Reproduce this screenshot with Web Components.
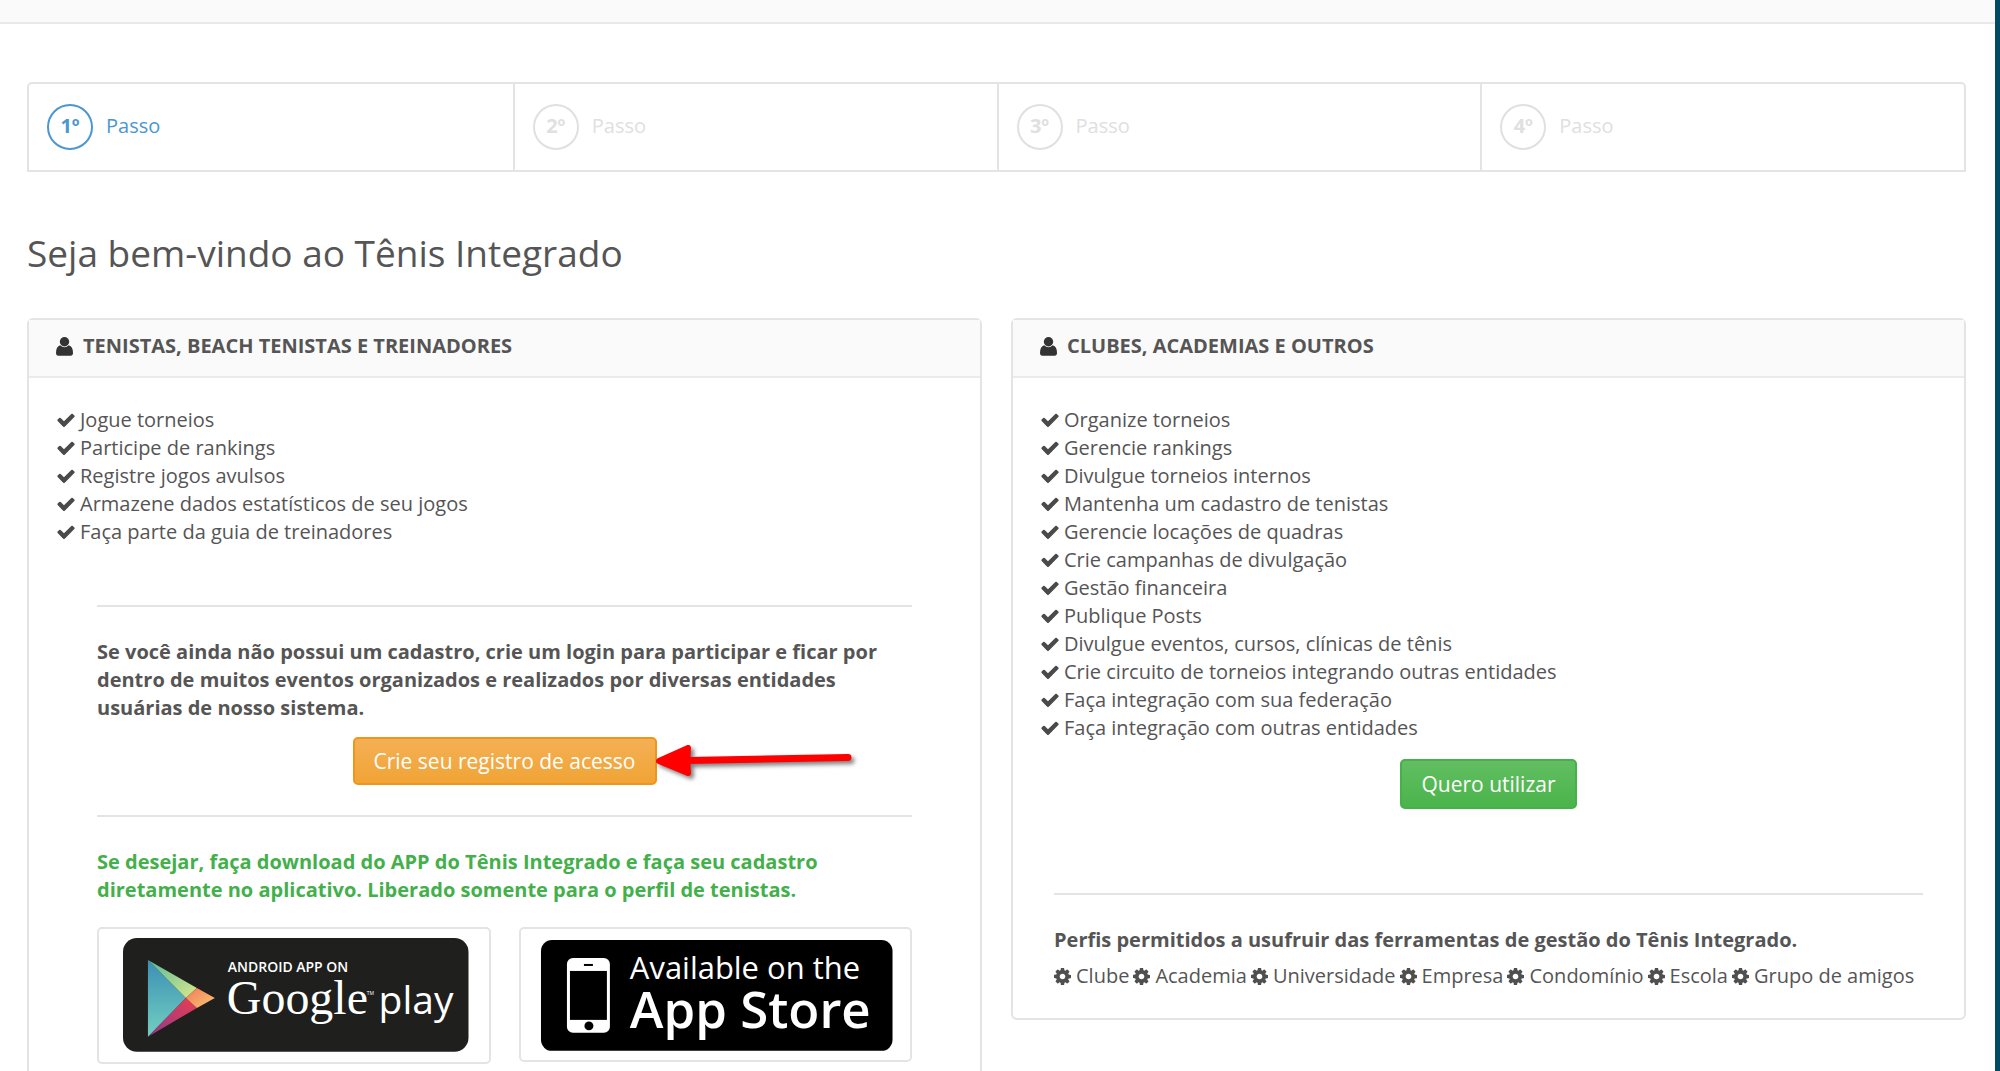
<!DOCTYPE html>
<html lang="pt-BR">
<head>
<meta charset="utf-8">
<title>Tênis Integrado</title>
<style>
    body{
        margin: 0;
        background: #fff;
        color: #555;
        font: 20px/28px "Open Sans", sans-serif;
    }
</style>
</head>
<body>
<cadastro-page>
    <step-list>
        <step-item number="1º" active>Passo</step-item>
        <step-item number="2º">Passo</step-item>
        <step-item number="3º">Passo</step-item>
        <step-item number="4º">Passo</step-item>
    </step-list>

    <page-title>Seja bem-vindo ao Tênis Integrado</page-title>

    <panel-row>
        <info-panel heading="TENISTAS, BEACH TENISTAS E TREINADORES">
            <check-list>
                <check-item>Jogue torneios</check-item>
                <check-item>Participe de rankings</check-item>
                <check-item>Registre jogos avulsos</check-item>
                <check-item>Armazene dados estatísticos de seu jogos</check-item>
                <check-item>Faça parte da guia de treinadores</check-item>
            </check-list>
            <panel-section style="--top: 57px; --inset: 41px">
                <bold-text>Se você ainda não possui um cadastro, crie um login para participar e ficar por dentro de muitos eventos organizados e realizados por diversas entidades usuárias de nosso sistema.</bold-text>
                <action-button kind="warning">Crie seu registro de acesso<red-arrow slot="mark"></red-arrow></action-button>
            </panel-section>
            <panel-section style="--top: 30px; --inset: 41px">
                <bold-text kind="success">Se desejar, faça download do APP do Tênis Integrado e faça seu cadastro diretamente no aplicativo. Liberado somente para o perfil de tenistas.</bold-text>
                <store-badges></store-badges>
            </panel-section>
        </info-panel>

        <info-panel heading="CLUBES, ACADEMIAS E OUTROS">
            <check-list>
                <check-item>Organize torneios</check-item>
                <check-item>Gerencie rankings</check-item>
                <check-item>Divulgue torneios internos</check-item>
                <check-item>Mantenha um cadastro de tenistas</check-item>
                <check-item>Gerencie locações de quadras</check-item>
                <check-item>Crie campanhas de divulgação</check-item>
                <check-item>Gestão financeira</check-item>
                <check-item>Publique Posts</check-item>
                <check-item>Divulgue eventos, cursos, clínicas de tênis</check-item>
                <check-item>Crie circuito de torneios integrando outras entidades</check-item>
                <check-item>Faça integração com sua federação</check-item>
                <check-item>Faça integração com outras entidades</check-item>
            </check-list>
            <action-button kind="success">Quero utilizar</action-button>
            <panel-section style="--top: 84px; --inset: 14px">
                <bold-text>Perfis permitidos a usufruir das ferramentas de gestão do Tênis Integrado.</bold-text>
                <profile-list items="Clube,Academia,Universidade,Empresa,Condomínio,Escola,Grupo de amigos"></profile-list>
            </panel-section>
        </info-panel>
    </panel-row>
</cadastro-page>

<script>
const LINE = '#e4e4e4'

// registers an element whose shadow root is cloned from the given markup
const define = (name, html, setup) => {
    const template = document.createElement('template')
    template.innerHTML = html

    window.customElements.define(name, class extends HTMLElement{
        constructor(){
            super()
            this.attachShadow({mode:"open"})
        }

        connectedCallback(){
            if(this.shadowRoot.childNodes.length) return
            const templateCopy = template.content.cloneNode(true)
            if(setup) setup(this, templateCopy)
            this.shadowRoot.appendChild(templateCopy)
        }
    })
}

define('cadastro-page', `
<style>
    :host{
        display: block;
        box-sizing: border-box;
        min-height: 100vh;
        border-right: 5px solid #004b63;
    }
    header{
        height: 22px;
        background: #fafafa;
        border-bottom: 2px solid #e9e9e9;
    }
    main{
        padding: 58px 29px 40px 27px;
    }
</style>
<header></header>
<main><slot></slot></main>
`)

define('step-list', `
<style>
    :host{
        display: grid;
        grid-template-columns: repeat(4, 1fr);
        border: 2px solid ${LINE};
        border-radius: 5px 5px 0 0;
    }
</style>
<slot></slot>
`)

define('step-item', `
<style>
    :host{
        display: flex;
        align-items: center;
        gap: 13px;
        padding: 20px 18px;
        color: #e0e0e0;
    }
    :host(:not(:first-child)){
        border-left: 2px solid ${LINE};
    }
    :host([active]){
        color: #4b97d2;
    }
    b{
        box-sizing: border-box;
        width: 46px;
        height: 46px;
        border: 2px solid;
        border-radius: 50%;
        line-height: 40px;
        text-align: center;
    }
    span{
        padding-bottom: 2px;
    }
</style>
<b></b>
<span><slot></slot></span>
`, (host, root) => {
    root.querySelector('b').textContent = host.getAttribute('number')
})

define('page-title', `
<style>
    :host{
        display: block;
        padding: 55px 0 39px;
    }
    h1{
        margin: 0;
        font-size: 37px;
        font-weight: 400;
        line-height: 52px;
    }
</style>
<h1><slot></slot></h1>
`)

define('panel-row', `
<style>
    :host{
        display: grid;
        grid-template-columns: 1fr 1fr;
        align-items: start;
        gap: 29px;
    }
</style>
<slot></slot>
`)

define('info-panel', `
<style>
    :host{
        display: block;
        border: 2px solid ${LINE};
        border-radius: 6px;
    }
    header{
        display: flex;
        align-items: center;
        gap: 10px;
        padding: 12px 27px 16px;
        background: #fafafa;
        border-bottom: 2px solid #ebebeb;
    }
    h2{
        margin: 0;
        font-size: 20px;
        line-height: 28px;
    }
    .body{
        padding: 28px 27px;
    }
</style>
<header>
    <svg width="17" height="19" viewBox="0 0 17 19" fill="#333" aria-hidden="true">
        <circle cx="8.5" cy="4.8" r="4.7"/>
        <path d="M4.2 8.2Q8.5 12.2 12.8 8.2Q17 9.6 17 15.8Q17 18.8 14.6 18.8H2.4Q0 18.8 0 15.8Q0 9.6 4.2 8.2Z"/>
    </svg>
    <h2></h2>
</header>
<div class="body"><slot></slot></div>
`, (host, root) => {
    root.querySelector('h2').textContent = host.getAttribute('heading')
})

define('check-list', `
<style>
    :host{
        display: block;
        padding-bottom: 2px;
    }
</style>
<div role="list"><slot></slot></div>
`)

define('check-item', `
<style>
    :host{
        display: flex;
        align-items: center;
        gap: 4px;
    }
</style>
<svg width="20" height="20" viewBox="0 0 1792 1792" fill="#4a4a4a" aria-hidden="true">
    <path d="M1671 566q0 40-28 68l-724 724-136 136q-28 28-68 28t-68-28l-136-136-362-362q-28-28-28-68t28-68l136-136q28-28 68-28t68 28l294 295 656-657q28-28 68-28t68 28l136 136q28 28 28 68z"/>
</svg>
<span><slot></slot></span>
`, host => host.setAttribute('role', 'listitem'))

define('panel-section', `
<style>
    :host{
        display: block;
        margin: var(--top) var(--inset) 0;
    }
    hr{
        margin: 0 0 31px;
        border: 0;
        border-top: 2px solid ${LINE};
    }
</style>
<hr>
<slot></slot>
`)

define('bold-text', `
<style>
    :host{
        display: block;
    }
    :host([kind=success]){
        color: #43b04b;
    }
    p{
        margin: 0;
        font-weight: 700;
    }
</style>
<p><slot></slot></p>
`)

define('action-button', `
<style>
    :host{
        display: flex;
        justify-content: center;
        margin-top: 15px;
    }
    div{
        position: relative;
    }
    button{
        display: block;
        padding: 8px 19px;
        border: 2px solid #ee961c;
        border-radius: 5px;
        background: linear-gradient(#f4b056, #f1a435);
        color: #fff;
        font: inherit;
        font-size: 21px;
        line-height: 28px;
    }
    :host([kind=success]) button{
        border-color: #46b04a;
        background: linear-gradient(#61be61, #4bb44b);
        padding: 9px 19px;
    }
</style>
<div>
    <button type="button"><slot></slot></button>
    <slot name="mark"></slot>
</div>
`)

// hand-drawn pointer laid over the page beside the button
define('red-arrow', `
<style>
    :host{
        position: absolute;
        left: 100%;
        top: 0;
        margin-left: -3px;
    }
    svg{
        display: block;
        filter: drop-shadow(3px 3px 2px rgba(0, 0, 0, .5));
    }
</style>
<svg width="206" height="48" viewBox="0 0 206 48" aria-hidden="true">
    <path d="M5 24L34 11Q33 24 34 36Z" fill="red" stroke="red" stroke-width="6" stroke-linejoin="round"/>
    <path d="M34 23.5L194 20.5" stroke="red" stroke-width="7" stroke-linecap="round"/>
</svg>
`)

define('store-badges', `
<style>
    :host{
        display: grid;
        grid-template-columns: 1fr 1fr;
        align-items: start;
        gap: 28px;
        margin-top: 23px;
    }
    a{
        display: block;
        padding: 7px;
        border: 2px solid ${LINE};
        border-radius: 5px;
    }
    svg{
        display: block;
        width: 100%;
    }
    text{
        fill: #fff;
        font-family: "Open Sans", sans-serif;
    }
</style>
<a href="#google-play">
    <svg viewBox="0 0 376 119">
        <defs>
            <linearGradient id="blue" x1="0" y1="0" x2="0" y2="1">
                <stop offset="0" stop-color="#3b8fb5"/>
                <stop offset="1" stop-color="#72d0c0"/>
            </linearGradient>
            <linearGradient id="green" x1="0" y1="0" x2="1" y2="1">
                <stop offset="0" stop-color="#58b99b"/>
                <stop offset="1" stop-color="#d9e98a"/>
            </linearGradient>
            <linearGradient id="red" x1="1" y1="0" x2="0" y2="1">
                <stop offset="0" stop-color="#ea3d50"/>
                <stop offset="1" stop-color="#8e3a8c"/>
            </linearGradient>
            <linearGradient id="orange" x1="0" y1="0" x2="1" y2="1">
                <stop offset="0" stop-color="#f4785a"/>
                <stop offset="1" stop-color="#f6c873"/>
            </linearGradient>
        </defs>
        <rect x="17" y="2" width="346" height="114" rx="14" fill="#1f1f1d"/>
        <path d="M42 24L80 62L42 101Z" fill="url(#blue)"/>
        <path d="M42 24L91 52L80 62Z" fill="url(#green)"/>
        <path d="M42 101L80 62L91 72Z" fill="url(#red)"/>
        <path d="M80 62L91 52L109 62L91 72Z" fill="url(#orange)"/>
        <text x="122" y="36" font-size="14" font-weight="600">ANDROID APP ON</text>
        <text x="121" y="78" style="font-family: 'Liberation Serif', serif" font-size="48">Google</text>
        <text x="261" y="59" font-size="5">TM</text>
        <text x="273" y="78" font-size="39">play</text>
    </svg>
</a>
<a href="#app-store">
    <svg viewBox="0 0 376 117">
        <rect x="13" y="4" width="352" height="111" rx="11"/>
        <rect x="39" y="22" width="43" height="75" rx="6" fill="#fff"/>
        <rect x="42" y="35" width="37" height="49"/>
        <path d="M56 29H65" stroke="#000" stroke-width="2"/>
        <circle cx="61" cy="90" r="4.5"/>
        <text x="102" y="43" font-size="31">Available on the</text>
        <text x="102" y="92" font-size="51" font-weight="600">App Store</text>
    </svg>
</a>
`)

define('profile-list', `
<style>
    :host{
        display: block;
        margin-top: 8px;
    }
    div{
        display: flex;
        flex-wrap: wrap;
        column-gap: 4px;
    }
    span{
        display: flex;
        align-items: center;
        gap: 5px;
        white-space: nowrap;
    }
</style>
<div></div>
`, (host, root) => {
    const list = root.querySelector('div')
    host.getAttribute('items').split(',').forEach(name => {
        const item = document.createElement('span')
        item.innerHTML = `<svg width="17" height="17" viewBox="128 128 1536 1536" fill="#4f4f4f" aria-hidden="true"><path d="M1152 896q0-106-75-181t-181-75-181 75-75 181 75 181 181 75 181-75 75-181zm512-109v222q0 12-8 23t-20 13l-185 28q-19 54-39 91 35 50 107 138 10 12 10 25t-9 23q-27 37-99 108t-94 71q-12 0-26-9l-138-108q-44 23-91 38-16 136-29 186-7 28-36 28h-222q-14 0-24.5-8.5t-11.5-21.5l-28-184q-49-16-90-37l-141 107q-10 9-25 9-14 0-25-11-126-114-165-168-7-10-7-23 0-12 8-23 15-21 51-66.5t54-70.5q-27-50-41-99l-183-27q-13-2-21-12.5t-8-23.5v-222q0-12 8-23t19-13l186-28q14-46 39-92-40-57-107-138-10-12-10-24 0-10 9-23 26-36 98.5-107.5t94.5-71.5q13 0 26 10l138 107q44-23 91-38 16-136 29-186 7-28 36-28h222q14 0 24.5 8.5t11.5 21.5l28 184q49 16 90 37l142-107q9-9 24-9 13 0 25 10 129 119 165 170 7 8 7 22 0 12-8 23-15 21-51 66.5t-54 70.5q26 50 41 98l183 28q13 2 21 12.5t8 23.5z"/></svg>`
        item.append(name)
        list.appendChild(item)
    })
})
</script>
</body>
</html>
